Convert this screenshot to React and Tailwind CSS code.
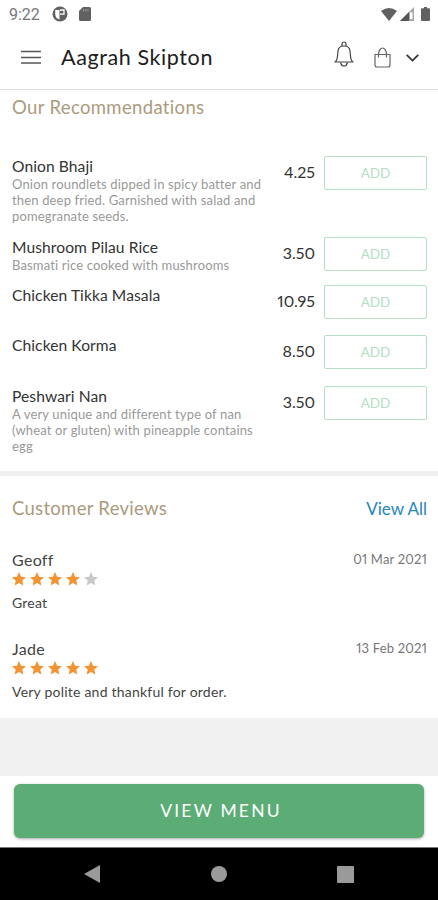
const items = [
  {
    name: 'Onion Bhaji',
    lines: ['Onion roundlets dipped in spicy batter and', 'then deep fried. Garnished with salad and', 'pomegranate seeds.'],
    price: '4.25',
    height: 'h-[81px]',
  },
  { name: 'Mushroom Pilau Rice', lines: ['Basmati rice cooked with mushrooms'], price: '3.50', height: 'h-[48px]' },
  { name: 'Chicken Tikka Masala', lines: [], price: '10.95', height: 'h-[50px]' },
  { name: 'Chicken Korma', lines: [], price: '8.50', height: 'h-[51px]' },
  {
    name: 'Peshwari Nan',
    lines: ['A very unique and different type of nan', '(wheat or gluten) with pineapple contains', 'egg'],
    price: '3.50',
    height: 'h-[85px]',
  },
];

const reviews = [
  { name: 'Geoff', date: '01 Mar 2021', stars: 4, text: 'Great' },
  { name: 'Jade', date: '13 Feb 2021', stars: 5, text: 'Very polite and thankful for order.' },
];

function StatusBar() {
  return (
    <div className="h-7 flex items-center pl-[9px] pr-2 text-[#666]">
      <span className="mt-0.5 w-[43px] font-[Roboto] text-[16px] leading-5 text-[#777]">9:22</span>
      <svg className="w-4 h-4" viewBox="0 0 16 16">
        <circle cx="8" cy="8" r="7.5" fill="#616161" />
        <path d="M3.200 4h4.300v9.500Q3.500 12.500 3.200 8z" fill="#fff" />
        <path d="M8 4h4v4.200H8" fill="none" stroke="#fff" strokeWidth="1.300" />
      </svg>
      <svg className="ml-[11px] w-3 h-[14px]" viewBox="0 0 12 14">
        <path d="M4 0h6.500q1.500 0 1.500 1.500v11q0 1.500-1.500 1.500h-9Q0 14 0 12.500V4z" fill="#616161" />
        <path d="M4.500 2v2.500M6.700 2v2.500M8.900 2v2.500" stroke="#999" strokeWidth="1" />
      </svg>
      <svg className="ml-auto w-4 h-[13px]" viewBox="0 0 16 13">
        <path d="M0 3Q8-3 16 3L8 13z" fill="#616161" />
      </svg>
      <svg className="ml-[3px] w-[14px] h-[14px]" viewBox="0 0 14 14">
        <path d="M0 14L14 0v14z" fill="#aaa" />
        <path d="M0 14L9 5v9z" fill="#555" />
        <path d="M10 5.500h2.500v6.500H10z" fill="#fff" />
      </svg>
      <svg className="ml-[7px] w-[9px] h-[14px]" viewBox="0 0 9 14">
        <path d="M3 0h3v1.300h2q1 0 1 1V13q0 1-1 1H1q-1 0-1-1V2.300q0-1 1-1h2z" fill="#616161" />
      </svg>
    </div>
  );
}

function Header() {
  return (
    <header className="h-[62px] flex items-center border-b border-[#e0e0e0] pl-[21px] pr-[19px]">
      <svg className="mb-1 w-5 h-[14px]" viewBox="0 0 20 14" stroke="#555" strokeWidth="1.4">
        <path d="M0 1.500h20M0 7.500h20M0 13h20" />
      </svg>
      <h1 className="ml-5 mb-1 text-[21.5px] leading-7 tracking-[0.6px] text-[#1c1c1c]">Aagrah Skipton</h1>
      <svg className="ml-auto mb-[9px] w-5 h-[26px]" viewBox="0 0 20 26" fill="none" stroke="#444" strokeWidth="1.2">
        <path d="M8 5V3a2 2 0 0 1 4 0v2M1 21c1.500-1 2.300-3 2.500-6l.5-5c.3-3.500 3-5 6-5s5.700 1.500 6 5l.5 5c.2 3 1 5 2.500 6z" strokeLinejoin="round" />
        <path d="M6.500 21.500c.5 2 1.500 3.500 3.500 3.500s3-1.500 3.500-3.500" />
      </svg>
      <svg className="ml-5 mb-[3px] w-[17px] h-[21px]" viewBox="0 0 17 21" fill="none" stroke="#666" strokeWidth="1.2">
        <path d="M1 7.500h15v10.500q0 2-2 2H3q-2 0-2-2z" />
        <path d="M4.500 10.500V7.500C4.500 4 6.500 1 8.500 1s4 3 4 6.500v3" />
      </svg>
      <svg className="ml-[15px] mb-0.5 w-[13px] h-2" viewBox="0 0 13 8" fill="none" stroke="#333" strokeWidth="1.7">
        <path d="M.7.8l5.800 5.700L12.300.8" />
      </svg>
    </header>
  );
}

function MenuItem({ item }) {
  return (
    <div className={`flex items-start ${item.height}`}>
      <div className="flex-1">
        <div className="pt-px text-[15.6px] leading-[19px] tracking-[0.08px] text-[#333]">{item.name}</div>
        {item.lines.map(line => (
          <div key={line} className="text-[13px] leading-4 tracking-[0.16px] text-[#999] whitespace-nowrap">{line}</div>
        ))}
      </div>
      <span className="mt-[5px] mr-[9px] text-[16px] leading-[21px] proportional-nums text-[#333]">{item.price}</span>
      <button className="w-[103px] h-[34px] border border-[#b5dec5] rounded-[2px] text-[13.5px] text-[#b5dec5]">ADD</button>
    </div>
  );
}

function Star({ filled }) {
  return (
    <svg className={`w-[14px] h-[14px] ${filled ? 'text-[#f29432]' : 'text-[#c8c8c8]'}`} viewBox="0 0 14 14" fill="currentColor">
      <path d="M7 0l2.100 4.700 4.900.5-3.700 3.400 1 5L7 11.100l-4.300 2.500 1-5L0 5.200l4.900-.5z" />
    </svg>
  );
}

function Review({ review }) {
  return (
    <div className="h-[89px]">
      <div className="flex justify-between items-start">
        <span className="text-[16px] leading-5 tracking-[0.3px] text-[#444]">{review.name}</span>
        <span className="mt-px text-[13px] leading-4 proportional-nums tracking-[0.2px] text-[#777]">{review.date}</span>
      </div>
      <div className="mt-0.5 flex gap-1">
        {[1, 2, 3, 4, 5].map(n => <Star key={n} filled={n <= review.stars} />)}
      </div>
      <p className="mt-2 text-[14px] leading-[18px] tracking-[0.22px] text-[#444]">{review.text}</p>
    </div>
  );
}

export default function App() {
  return (
    <div className="w-[438px] h-[900px] flex flex-col overflow-hidden bg-white font-[Lato,sans-serif]">
      <StatusBar />
      <Header />

      <section className="h-[381px] pl-3 pr-[11px] pt-[5px]">
        <h2 className="mb-9 text-[18.5px] leading-[25px] tracking-[0.35px] text-[#ab9b7d]">Our Recommendations</h2>
        {items.map(item => <MenuItem key={item.name} item={item} />)}
      </section>
      <div className="h-[5px] shrink-0 bg-[#f0f0f0]" />

      <section className="h-[242px] pl-3 pr-[11px] pt-5">
        <div className="mb-[29px] h-[25px] flex items-center justify-between">
          <h2 className="text-[18.5px] leading-[25px] tracking-[0.3px] text-[#ab9b7d]">Customer Reviews</h2>
          <span className="text-[17px] leading-[25px] text-[#2586b8]">View All</span>
        </div>
        {reviews.map(review => <Review key={review.name} review={review} />)}
      </section>
      <div className="h-[58px] bg-[#f0f0f0]" />

      <div className="h-[71px] px-[14px] pt-2">
        <button className="w-full h-[54px] pl-1 rounded-[6px] bg-[#5bad75] text-[17.5px] tracking-[2.2px] text-white shadow-[0_1px_3px_rgba(0,0,0,0.35)]">
          VIEW MENU
        </button>
      </div>
      <nav className="h-[53px] border-t border-[#777] bg-black flex items-center justify-between pl-[84px] pr-[84px]">
        <svg className="w-4 h-[18px]" viewBox="0 0 16 18" fill="#9a9a9a"><path d="M0 9L16 0v18z" /></svg>
        <div className="w-4 h-4 rounded-full bg-[#9a9a9a]" />
        <div className="w-[17px] h-[17px] rounded-[1px] bg-[#9a9a9a]" />
      </nav>
    </div>
  );
}
